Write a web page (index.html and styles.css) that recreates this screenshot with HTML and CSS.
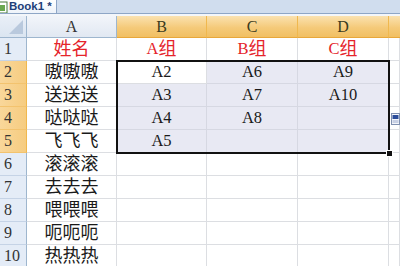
FILE: index.html
```html
<!DOCTYPE html>
<html>
<head>
<meta charset="utf-8">
<link rel="stylesheet" href="styles.css">
</head>
<body>
<div class="tabbar">
  <div class="tab">
    <svg class="tabicon" width="8" height="12" viewBox="0 0 8 12"><rect x="-4" y="1" width="11" height="11" fill="#fff" stroke="#4a7a3a"/><rect x="-2" y="4" width="7" height="6" fill="#6aa84f"/></svg>
    <span class="tabtext">Book1 *</span>
  </div>
</div>
<div class="gap"></div>
<div class="sheet">
  <div class="corner"><span class="tri"></span></div>
  <div class="ch">A</div><div class="ch sel">B</div><div class="ch sel">C</div><div class="ch sel">D</div><div class="ch sel end"></div>

  <div class="rh">1</div><div class="c red"><span class="zh">姓名</span></div><div class="c red">A<span class="zh">组</span></div><div class="c red">B<span class="zh">组</span></div><div class="c red">C<span class="zh">组</span></div><div class="c"></div>
  <div class="rh sel">2</div><div class="c"><span class="zh">嗷嗷嗷</span></div><div class="c active">A2</div><div class="c s">A6</div><div class="c s">A9</div><div class="c"></div>
  <div class="rh sel">3</div><div class="c"><span class="zh">送送送</span></div><div class="c s">A3</div><div class="c s">A7</div><div class="c s">A10</div><div class="c"></div>
  <div class="rh sel">4</div><div class="c"><span class="zh">哒哒哒</span></div><div class="c s">A4</div><div class="c s">A8</div><div class="c s"></div><div class="c"></div>
  <div class="rh sel">5</div><div class="c"><span class="zh">飞飞飞</span></div><div class="c s">A5</div><div class="c s"></div><div class="c s"></div><div class="c"></div>
  <div class="rh">6</div><div class="c"><span class="zh">滚滚滚</span></div><div class="c"></div><div class="c"></div><div class="c"></div><div class="c"></div>
  <div class="rh">7</div><div class="c"><span class="zh">去去去</span></div><div class="c"></div><div class="c"></div><div class="c"></div><div class="c"></div>
  <div class="rh">8</div><div class="c"><span class="zh">喂喂喂</span></div><div class="c"></div><div class="c"></div><div class="c"></div><div class="c"></div>
  <div class="rh">9</div><div class="c"><span class="zh">呃呃呃</span></div><div class="c"></div><div class="c"></div><div class="c"></div><div class="c"></div>
  <div class="rh">10</div><div class="c"><span class="zh">热热热</span></div><div class="c"></div><div class="c"></div><div class="c"></div><div class="c"></div>

  <div class="selbox"><span class="handle"></span></div>
  <div class="paste">
    <svg width="9" height="12" viewBox="0 0 9 12"><rect x="0.5" y="0.5" width="8" height="11" fill="#f4f6fb" stroke="#8090b0"/><rect x="1.5" y="2" width="6" height="4" fill="#2b4c9a"/><rect x="1.5" y="7" width="6" height="3" fill="#c8d0e4"/></svg>
  </div>
</div>
</body>
</html>
```
FILE: styles.css
```css
* { box-sizing: border-box; }
html, body { margin: 0; padding: 0; }
body {
  width: 400px;
  height: 266px;
  overflow: hidden;
  background: #fff;
  font-family: "Liberation Serif", "Noto Sans CJK SC", serif;
}
.tabbar {
  height: 14px;
  background: #d0ddee;
  border-bottom: 1px solid #8ea6c6;
  display: flex;
}
.tab {
  height: 13px;
  padding-right: 4px;
  background: linear-gradient(#ffffff, #eef3fa);
  border-right: 1px solid #8ea6c6;
  display: flex;
  align-items: center;
  gap: 1px;
  white-space: nowrap;
}
.tabicon { flex: none; }
.tabtext {
  font-family: "Liberation Sans", "DejaVu Sans", sans-serif;
  font-weight: bold;
  font-size: 11.5px;
  color: #1e3e78;
  line-height: 13px;
  white-space: nowrap;
}
.gap {
  height: 2px;
  background: #f3f6fa;
}
.sheet {
  position: relative;
  display: grid;
  grid-template-columns: 27px 90px 90px 91px 91px 11px;
  grid-template-rows: 22px repeat(10, 23px);
}
.corner {
  position: relative;
  background: linear-gradient(#e9eff7, #dbe5f1);
  border-right: 1px solid #9eb6ce;
  border-bottom: 1px solid #9eb6ce;
}
.tri {
  position: absolute;
  right: 3px;
  bottom: 3px;
  width: 0;
  height: 0;
  border-left: 14px solid transparent;
  border-bottom: 14px solid #b9c9dd;
}
.ch {
  background: linear-gradient(#f2f5fa, #e1e8f2);
  border-right: 1px solid #9eb6ce;
  border-bottom: 1px solid #9eb6ce;
  color: #333;
  font-size: 16px;
  display: flex;
  align-items: center;
  justify-content: center;
}
.ch.sel {
  background: linear-gradient(#fbe2b0, #f5ca7a 55%, #f1bf62);
  border-right-color: #f0b84e;
  border-bottom-color: #e8a73a;
  color: #3b3b20;
}
.ch.end { border-right: none; }
.rh {
  background: #e4ecf7;
  border-right: 1px solid #9eb6ce;
  border-bottom: 1px solid #c5d3e6;
  color: #333;
  font-size: 16px;
  display: flex;
  align-items: center;
  justify-content: flex-start;
  padding-left: 4px;
}
.rh.sel {
  background: linear-gradient(90deg, #f9d79a, #f6cc80);
  border-right-color: #f0b84e;
  border-bottom-color: #f3c36e;
}
.c {
  border-right: 1px solid #dcdee2;
  border-bottom: 1px solid #dcdee2;
  font-size: 16.5px;
  color: #1a1a1a;
  display: flex;
  align-items: center;
  justify-content: center;
  white-space: nowrap;
}
.zh {
  font-size: 18px;
  line-height: 20px;
}
.c.red { color: #e5242b; }
.c.s { background: #e8e9f3; border-color: #d6d8e2; }
.c.active { background: #fff; }
.selbox {
  position: absolute;
  left: 116px;
  top: 44px;
  width: 274px;
  height: 94px;
  border: 2px solid #111;
  pointer-events: none;
}
.handle {
  position: absolute;
  right: -5px;
  bottom: -5px;
  width: 7px;
  height: 7px;
  background: #111;
  border: 1px solid #fff;
}
.paste {
  position: absolute;
  left: 391px;
  top: 95px;
}
```
